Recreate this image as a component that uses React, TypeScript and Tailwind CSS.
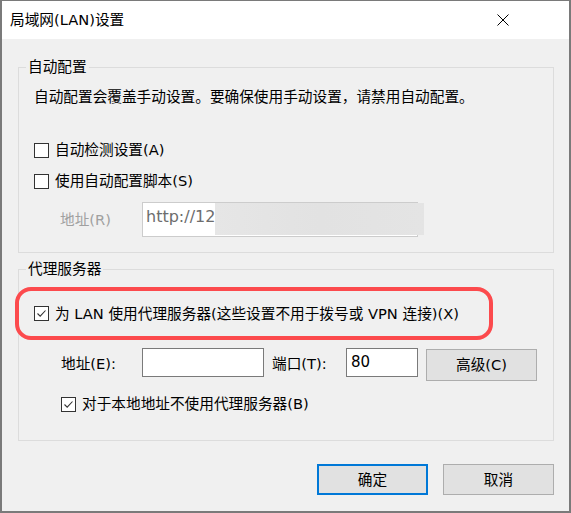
import React from "react";

const font = { fontFamily: '"DejaVu Sans", "Noto Sans CJK SC", sans-serif' };

const Check = ({ checked = false, label }: { checked?: boolean; label: string }) => (
  <div className="flex items-center h-[20px]">
    <span className="w-[15px] h-[15px] border border-[#333333] bg-white flex items-center justify-center">
      {checked && (
        <svg width="11" height="11" viewBox="0 0 11 11">
          <path d="M1.5 5.5 L4.2 8.2 L9.5 2.5" fill="none" stroke="#333333" strokeWidth="1.1" />
        </svg>
      )}
    </span>
    <span className="ml-[6px]">{label}</span>
  </div>
);

const Group = ({ title, children, className = "", innerClass = "" }: any) => (
  <fieldset className={`border border-[#dcdcdc] w-[536px] ${className}`}>
    <legend className="ml-[7px] px-[2px] h-[20px] leading-[20px]">{title}</legend>
    <div className={innerClass}>{children}</div>
  </fieldset>
);

const Button = ({ label, primary = false, className = "" }: any) => (
  <button
    className={`bg-[#e1e1e1] flex items-center justify-center ${
      primary ? "border-2 border-[#0078d7]" : "border border-[#adadad]"
    } ${className}`}
  >
    {label}
  </button>
);

export default function App() {
  return (
    <div
      className="w-[571px] h-[513px] bg-[#f0f0f0] border-x-2 border-b-2 border-t border-[#7a7a7a] flex flex-col text-[14.67px] text-black leading-[20px]"
      style={font}
    >
      <div className="h-[38px] bg-white flex items-center justify-between pl-[8px] pr-[60px]">
        <span>局域网(LAN)设置</span>
        <svg width="12" height="12" viewBox="0 0 12 12">
          <path d="M0.5 0.5 L11.5 11.5 M11.5 0.5 L0.5 11.5" stroke="#000" strokeWidth="1" />
        </svg>
      </div>

      <div className="pl-[16px] pt-[18px]">
        <Group title="自动配置" className="pb-[15px]" innerClass="pl-[15px]">
          <div className="mt-[10px]">自动配置会覆盖手动设置。要确保使用手动设置，请禁用自动配置。</div>
          <div className="mt-[33px]">
            <Check label="自动检测设置(A)" />
          </div>
          <div className="mt-[11px]">
            <Check label="使用自动配置脚本(S)" />
          </div>
          <div className="mt-[11px] flex items-center">
            <span className="ml-[26px] w-[82px] text-[#a0a0a0]">地址(R)</span>
            <div className="w-[276px] h-[35px] border border-[#cccccc] bg-white flex items-start">
              <span className="pl-[3px] pt-[4px] text-[#6d6d6d] text-[16px]">http://12</span>
              <div className="flex-1 h-[32px] -mr-[7px] bg-gradient-to-r from-[#e6e6e6] via-[#e2e2e2] to-[#e4e4e4]" />
            </div>
          </div>
        </Group>

        <Group title="代理服务器" className="mt-[6px] pb-[26px]">
          <div className="mt-[8px] -ml-[4px] w-[478px] h-[53px] border-4 border-[#fc4a4d] rounded-[16px] flex items-center pl-[15px]">
            <Check checked label="为 LAN 使用代理服务器(这些设置不用于拨号或 VPN 连接)(X)" />
          </div>
          <div className="mt-[8px] flex items-start">
            <span className="ml-[42px] w-[81px] h-[32px] leading-[32px]">地址(E):</span>
            <div className="w-[122px] h-[29px] border border-[#7a7a7a] bg-white" />
            <span className="ml-[8px] w-[74px] h-[32px] leading-[32px]">端口(T):</span>
            <div className="w-[72px] h-[29px] border border-[#7a7a7a] bg-white pl-[4px] leading-[26px] text-[15px]">80</div>
            <Button label="高级(C)" className="ml-[8px] mt-[1px] w-[111px] h-[32px]" />
          </div>
          <div className="mt-[13px] ml-[42px]">
            <Check checked label="对于本地地址不使用代理服务器(B)" />
          </div>
        </Group>

        <div className="w-[536px] mt-[23px] flex justify-end gap-[15px]">
          <Button label="确定" primary className="w-[111px] h-[31px]" />
          <Button label="取消" className="w-[111px] h-[31px]" />
        </div>
      </div>
    </div>
  );
}
